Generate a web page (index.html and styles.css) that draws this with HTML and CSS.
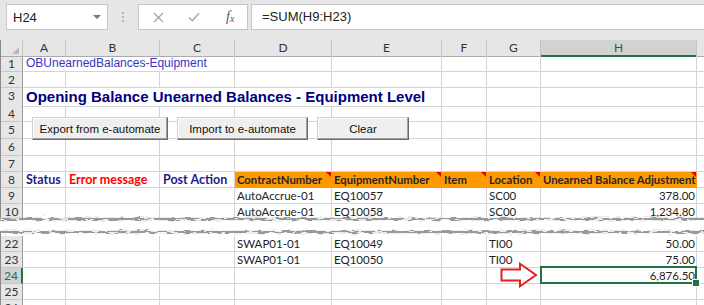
FILE: index.html
```html
<!DOCTYPE html>
<html lang="en">
<head>
    <meta charset="UTF-8">
    <meta name="viewport" content="width=device-width, initial-scale=1.0">
    <title>OBUnearnedBalances-Equipment</title>
    <link rel="stylesheet" href="styles.css">
</head>
<body>
    <div class="toolbar">
        <div class="namebox">
            <span>H24</span>
            <span class="caret"></span>
        </div>
        <div class="grip"><i></i><i></i><i></i></div>
        <div class="fxbox">
            <svg width="11" height="11" viewBox="0 0 11 11"><path d="M1 1L10 10M10 1L1 10" stroke="#a6a6a6" stroke-width="1.3" fill="none"/></svg>
            <svg width="12" height="10" viewBox="0 0 12 10"><path d="M1 5.5L4.3 8.8L11 1.2" stroke="#a6a6a6" stroke-width="1.4" fill="none"/></svg>
            <span class="fx"><i>f</i><sub>x</sub></span>
        </div>
        <div class="formula">=SUM(H9:H23)</div>
    </div>

    <div class="sheet">
        <div class="row head">
            <div class="corner"><span></span></div>
            <div>A</div><div>B</div><div>C</div><div>D</div><div>E</div><div>F</div><div>G</div><div class="on">H</div><div></div>
        </div>
        <div class="row">
            <div class="rh">1</div>
            <div class="span3 doc">OBUnearnedBalances-Equipment</div>
            <div></div><div></div><div></div><div></div><div></div><div></div>
        </div>
        <div class="row">
            <div class="rh">2</div>
            <div></div><div></div><div></div><div></div><div></div><div></div><div></div><div></div><div></div>
        </div>
        <div class="row tall">
            <div class="rh">3</div>
            <div class="span5 title">Opening Balance Unearned Balances - Equipment Level</div>
            <div></div><div></div><div></div><div></div>
        </div>
        <div class="row">
            <div class="rh">4</div>
            <div></div><div></div><div></div><div></div><div></div><div></div><div></div><div></div><div></div>
        </div>
        <div class="row mid">
            <div class="rh">5</div>
            <div></div><div></div><div></div><div></div><div></div><div></div><div></div><div></div><div></div>
        </div>
        <div class="row mid">
            <div class="rh">6</div>
            <div></div><div></div><div></div><div></div><div></div><div></div><div></div><div></div><div></div>
        </div>
        <div class="row">
            <div class="rh">7</div>
            <div></div><div></div><div></div><div></div><div></div><div></div><div></div><div></div><div></div>
        </div>
        <div class="row">
            <div class="rh">8</div>
            <div class="lbl blue">Status</div>
            <div class="lbl red">Error message</div>
            <div class="lbl blue">Post Action</div>
            <div class="hdr">ContractNumber</div>
            <div class="hdr">EquipmentNumber</div>
            <div class="hdr">Item</div>
            <div class="hdr">Location</div>
            <div class="hdr">Unearned Balance Adjustment</div>
            <div></div>
        </div>
        <div class="row">
            <div class="rh">9</div>
            <div></div><div></div><div></div>
            <div>AutoAccrue-01</div><div>EQ10057</div><div></div><div>SC00</div><div class="num">378.00</div><div></div>
        </div>
        <div class="row">
            <div class="rh">10</div>
            <div></div><div></div><div></div>
            <div>AutoAccrue-01</div><div>EQ10058</div><div></div><div>SC00</div><div class="num">1,234.80</div><div></div>
        </div>

        <div class="tear">
            <svg width="704" height="21" viewBox="0 0 704 21">
                <defs>
                    <filter id="torn" x="-5%" y="-50%" width="110%" height="200%">
                        <feTurbulence type="fractalNoise" baseFrequency="0.12 0.7" numOctaves="2" seed="7" result="noise"/>
                        <feDisplacementMap in="SourceGraphic" in2="noise" scale="5" xChannelSelector="R" yChannelSelector="G" result="moved"/>
                        <feGaussianBlur in="moved" stdDeviation="0.6"/>
                    </filter>
                </defs>
                <rect x="-10" y="4" width="724" height="13" fill="#fff" stroke="#999" stroke-width="2.4" filter="url(#torn)"/>
            </svg>
        </div>

        <div class="row">
            <div class="rh">22</div>
            <div></div><div></div><div></div>
            <div>SWAP01-01</div><div>EQ10049</div><div></div><div>TI00</div><div class="num">50.00</div><div></div>
        </div>
        <div class="row">
            <div class="rh">23</div>
            <div></div><div></div><div></div>
            <div>SWAP01-01</div><div>EQ10050</div><div></div><div>TI00</div><div class="num">75.00</div><div></div>
        </div>
        <div class="row">
            <div class="rh on">24</div>
            <div></div><div></div><div></div><div></div><div></div><div></div><div></div>
            <div class="num sel">6,876.50</div><div></div>
        </div>
        <div class="row">
            <div class="rh">25</div>
            <div></div><div></div><div></div><div></div><div></div><div></div><div></div><div></div><div></div>
        </div>
        <div class="row">
            <div class="rh">26</div>
            <div></div><div></div><div></div><div></div><div></div><div></div><div></div><div></div><div></div>
        </div>

        <button class="btn export">Export from e-automate</button>
        <button class="btn import">Import to e-automate</button>
        <button class="btn clear">Clear</button>

        <svg class="arrow" width="38" height="26" viewBox="0 0 38 26">
            <path d="M1.5 7.5H20V1.8L36 13L20 24.2V18.5H1.5Z" fill="#fff" stroke="#e5201f" stroke-width="2" stroke-linejoin="miter"/>
        </svg>
    </div>
</body>
</html>
```

FILE: styles.css
```css
* {
    box-sizing: border-box;
    margin: 0;
    padding: 0;
}

html, body {
    width: 704px;
    height: 305px;
    overflow: hidden;
    background: #fff;
    font-family: Lato, "Liberation Sans", sans-serif;
}

/* formula bar */

.toolbar {
    height: 40px;
    background: #e6e6e6;
    display: flex;
    align-items: flex-start;
    padding: 4px 0 0 6px;
}

.namebox {
    width: 102px;
    height: 26px;
    background: #fff;
    border: 1px solid #c6c6c6;
    display: flex;
    align-items: center;
    justify-content: space-between;
    padding: 0 6px 0 6px;
    font: 13px "Liberation Sans", sans-serif;
    color: #222;
}

.caret {
    width: 0;
    height: 0;
    border-left: 4px solid transparent;
    border-right: 4px solid transparent;
    border-top: 4px solid #777;
}

.grip {
    width: 30px;
    height: 26px;
    display: flex;
    flex-direction: column;
    align-items: center;
    justify-content: center;
    gap: 2px;
}

.grip i {
    width: 2px;
    height: 2px;
    background: #b4b4b4;
}

.fxbox {
    width: 110px;
    height: 26px;
    background: #fff;
    border: 1px solid #c6c6c6;
    display: flex;
    align-items: center;
    padding-left: 14px;
    gap: 24px;
}

.fx {
    font: italic 14px "Liberation Serif", serif;
    color: #555;
    margin-left: 2px;
}

.fx sub {
    font-size: 10px;
    vertical-align: -1px;
}

.formula {
    flex: 1;
    height: 26px;
    margin-left: 3px;
    background: #fff;
    border: 1px solid #c6c6c6;
    border-right: none;
    padding-left: 10px;
    font: 13px/24px "Liberation Sans", sans-serif;
    color: #222;
}

/* grid */

.sheet {
    position: relative;
    border-left: 1px solid #8a8a8a;
}

.row {
    display: grid;
    grid-template-columns: 22px 43px 94px 75px 97px 110px 45px 54px 156px 7px;
    height: 16px;
}

.row.tall {
    height: 18px;
}

.row.mid {
    height: 17px;
}

.row > div {
    border-right: 1px solid #d4d4d4;
    border-bottom: 1px solid #d4d4d4;
    white-space: nowrap;
    font-size: 11.5px;
    line-height: 15px;
    color: #1e1e1e;
    padding: 0 2px;
}

.row > div:last-child {
    border-right: none;
}

.span3 {
    grid-column: span 3;
}

.span5 {
    grid-column: span 5;
}

.head > div {
    background: #e6e6e6;
    border-right-color: #c4c4c4;
    border-bottom-color: #ababab;
    text-align: center;
    color: #333;
    font-size: 12px;
}

.head > div.on {
    background: #d2d2d2;
    border-bottom: 2px solid #217346;
    color: #2b5c47;
}

.corner {
    position: relative;
}

.corner span {
    position: absolute;
    right: 3px;
    bottom: 2px;
    width: 0;
    height: 0;
    border-left: 7px solid transparent;
    border-bottom: 7px solid #b9b9b9;
}

.row > .rh {
    background: #e6e6e6;
    border-right-color: #9c9c9c;
    border-bottom-color: #c6c6c6;
    text-align: center;
    color: #333;
    font-size: 12px;
    padding: 0;
}

.row > .rh.on {
    background: #d2d2d2;
    border-right: 2px solid #217346;
    color: #217346;
}

.row > .doc {
    font: 12px/15px "Liberation Sans", sans-serif;
    color: #3434c4;
    padding-left: 3px;
}

.row > .title {
    font: bold 15px/18px "Liberation Sans", sans-serif;
    color: #000080;
    padding-left: 3px;
}

.row > .lbl {
    font-weight: bold;
    font-size: 12.5px;
    padding-left: 3px;
}

.row > .blue {
    color: #1d1d8e;
}

.row > .red {
    color: #ff0000;
}

.row > .hdr {
    position: relative;
    background: #ff9900;
    border-right-color: #ff9900;
    border-bottom-color: #ff9900;
    font-weight: bold;
    font-size: 11.3px;
    color: #262626;
}

.hdr::after {
    content: '';
    position: absolute;
    top: 0;
    right: 0;
    border-left: 5px solid transparent;
    border-top: 5px solid #e00000;
}

.row > .num {
    text-align: right;
    padding-right: 1px;
}

.sel {
    position: relative;
}

.sel::after {
    content: '';
    position: absolute;
    top: -2px;
    left: -1px;
    right: -1px;
    bottom: -1px;
    border: 2px solid #217346;
}

.sel::before {
    content: '';
    position: absolute;
    right: -4px;
    bottom: -4px;
    width: 6px;
    height: 6px;
    background: #217346;
    border: 1px solid #fff;
    z-index: 1;
}

/* torn edge between row 10 and row 22 */

.tear {
    position: relative;
    z-index: 2;
    height: 21px;
    margin-top: -5px;
    margin-left: -1px;
}

.tear svg {
    display: block;
    overflow: visible;
}

/* form buttons floating over the sheet */

.btn {
    position: absolute;
    top: 77px;
    height: 23px;
    background: #efefef;
    border: 1px solid;
    border-color: #cfcfcf #6a6a6a #6a6a6a #cfcfcf;
    box-shadow: inset -1px -1px 0 #a0a0a0, inset 1px 1px 0 #fff;
    font: 11.5px "Liberation Sans", sans-serif;
    color: #111;
}

.export {
    left: 31px;
    width: 136px;
}

.import {
    left: 176px;
    width: 131px;
}

.clear {
    left: 316px;
    width: 92px;
}

.arrow {
    position: absolute;
    left: 499px;
    top: 222px;
}
```
